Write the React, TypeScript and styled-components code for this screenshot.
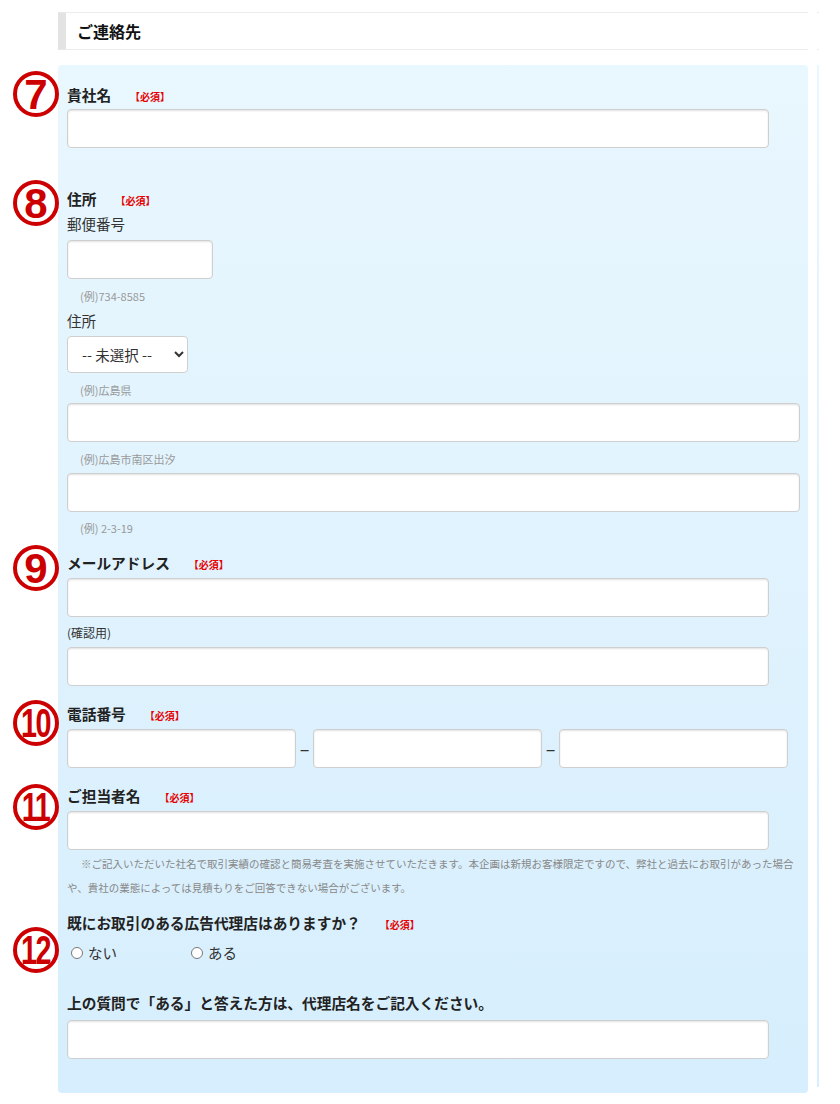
import React from 'react';
import styled, { createGlobalStyle } from 'styled-components';

const GlobalStyle = createGlobalStyle`
  body {
    margin: 0;
    background: #fff;
    font-family: "Noto Sans CJK JP", "Noto Sans", sans-serif;
    color: #222;
  }
`;

const Page = styled.div`
  display: flex;
  align-items: flex-start;
  padding: 12px 0 0 58px;
`;

const Main = styled.div`
  width: 750px;
`;

const SectionHead = styled.h2`
  margin: 0;
  height: 38px;
  box-sizing: border-box;
  display: flex;
  align-items: center;
  padding-left: 11px;
  border-top: 1px solid #ececec;
  border-bottom: 1px solid #ececec;
  border-left: 8px solid #e3e3e3;
  font-size: 16px;
  font-weight: 700;
  color: #111;
`;

const Panel = styled.div`
  margin-top: 15px;
  padding: 20px 8px 34px 9px;
  border-radius: 4px;
  background: linear-gradient(#e9f7fe, #d6eefd);
`;

const Side = styled.div`
  width: 2px;
  margin-left: 9px;
  overflow: hidden;
`;

const SideHead = styled.div`
  height: 38px;
  box-sizing: border-box;
  border-top: 1px solid #ececec;
  border-bottom: 1px solid #ececec;
`;

const SidePanel = styled.div`
  margin-top: 15px;
  height: 1022px;
  background: linear-gradient(#e9f7fe, #d6eefd);
`;

const Field = styled.div<{ $mt?: number }>`
  position: relative;
  display: flex;
  flex-direction: column;
  align-items: flex-start;
  margin-top: ${p => p.$mt ?? 0}px;
`;

const Badge = styled.div<{ $top: number }>`
  position: absolute;
  left: -54px;
  top: ${p => p.$top}px;
  width: 46px;
  height: 46px;
  box-sizing: border-box;
  border: 4px solid #cc0000;
  border-radius: 50%;
  display: flex;
  align-items: center;
  justify-content: center;
  overflow: hidden;
`;

const Num = styled.span<{ $narrow?: boolean }>`
  font-family: "Liberation Sans", Arial, sans-serif;
  font-weight: 700;
  font-size: ${p => (p.$narrow ? 40 : 42)}px;
  line-height: 1;
  color: #cc0000;
  letter-spacing: ${p => (p.$narrow ? '-2px' : '0')};
  transform: ${p => (p.$narrow ? 'scaleX(0.72) translateX(-1px)' : 'translateY(1px)')};
`;

const Label = styled.div<{ $mt?: number }>`
  margin-top: ${p => p.$mt ?? 0}px;
  height: 20px;
  font-size: 14.7px;
  font-weight: 700;
  line-height: 20px;
  color: #222;
  white-space: nowrap;
`;

const Req = styled.span`
  margin-left: 19px;
  font-size: 10px;
  font-weight: 700;
  line-height: 1;
  color: #e60000;
`;

const SubLabel = styled.div<{ $mt?: number; $small?: boolean }>`
  margin-top: ${p => p.$mt ?? 0}px;
  font-size: ${p => (p.$small ? 12 : 14.5)}px;
  line-height: ${p => (p.$small ? 16 : 20)}px;
  color: #333;
`;

const Hint = styled.div<{ $mt?: number }>`
  margin-top: ${p => p.$mt ?? 0}px;
  padding-left: 13px;
  font-size: 11px;
  line-height: 14px;
  color: #999;
`;

const TextInput = styled.input<{ $mt?: number; $w?: string }>`
  margin: ${p => p.$mt ?? 0}px 0 0 0;
  width: ${p => p.$w ?? '702px'};
  height: 39px;
  box-sizing: border-box;
  border: 1px solid #cfcfcf;
  border-radius: 4px;
  background: #fff;
  box-shadow: inset 0 1px 2px rgba(0, 0, 0, 0.12);
  padding: 0 8px;
  font-size: 14px;
  font-family: inherit;
  outline: none;
`;

const Select = styled.select<{ $mt?: number }>`
  margin-top: ${p => p.$mt ?? 0}px;
  width: 121px;
  height: 37px;
  box-sizing: border-box;
  border: 1px solid #cfcfcf;
  border-radius: 4px;
  background: #fff;
  padding: 0 4px 0 10px;
  font-size: 14.5px;
  font-family: inherit;
  color: #333;
`;

const PhoneRow = styled.div<{ $mt?: number }>`
  margin-top: ${p => p.$mt ?? 0}px;
  display: flex;
  align-items: center;
`;

const Dash = styled.span`
  width: 17px;
  text-align: center;
  font-size: 18px;
  line-height: 1;
  color: #333;
  transform: translateY(-1px);
`;

const Note = styled.p<{ $mt?: number }>`
  margin: ${p => p.$mt ?? 0}px 0 0 0;
  width: 733px;
  font-size: 10.5px;
  line-height: 24px;
  color: #888;
  text-indent: 14px;
`;

const RadioRow = styled.div<{ $mt?: number }>`
  margin-top: ${p => p.$mt ?? 0}px;
  height: 20px;
  display: flex;
  align-items: center;
  padding-left: 4px;
`;

const RadioOption = styled.label`
  min-width: 120px;
  display: inline-flex;
  align-items: center;
  gap: 5px;
  font-size: 14.5px;
  line-height: 20px;
  color: #333;
  input {
    margin: 0;
    width: 12px;
    height: 12px;
  }
`;

const phoneWidth = '229px';

export default function App() {
  return (
    <>
      <GlobalStyle />
      <Page>
        <Main>
          <SectionHead>ご連絡先</SectionHead>
          <Panel>
            <Field>
              <Badge $top={-14}><Num>7</Num></Badge>
              <Label>貴社名<Req>【必須】</Req></Label>
              <TextInput $mt={4} />
            </Field>

            <Field $mt={41}>
              <Badge $top={-9}><Num>8</Num></Badge>
              <Label>住所<Req>【必須】</Req></Label>
              <SubLabel $mt={5}>郵便番号</SubLabel>
              <TextInput $mt={6} $w="146px" />
              <Hint $mt={10}>(例)734-8585</Hint>
              <SubLabel $mt={8}>住所</SubLabel>
              <Select $mt={5} defaultValue="">
                <option value="">-- 未選択 --</option>
              </Select>
              <Hint $mt={10}>(例)広島県</Hint>
              <TextInput $mt={6} $w="733px" />
              <Hint $mt={10}>(例)広島市南区出汐</Hint>
              <TextInput $mt={7} $w="733px" />
              <Hint $mt={9}>(例) 2-3-19</Hint>
            </Field>

            <Field $mt={18}>
              <Badge $top={-8}><Num>9</Num></Badge>
              <Label>メールアドレス<Req>【必須】</Req></Label>
              <TextInput $mt={5} />
              <SubLabel $mt={8} $small>(確認用)</SubLabel>
              <TextInput $mt={6} />
            </Field>

            <Field $mt={18}>
              <Badge $top={-4}><Num $narrow>10</Num></Badge>
              <Label>電話番号<Req>【必須】</Req></Label>
              <PhoneRow $mt={5}>
                <TextInput $w={phoneWidth} />
                <Dash>–</Dash>
                <TextInput $w={phoneWidth} />
                <Dash>–</Dash>
                <TextInput $w={phoneWidth} />
              </PhoneRow>
            </Field>

            <Field $mt={18}>
              <Badge $top={-2}><Num $narrow>11</Num></Badge>
              <Label>ご担当者名<Req>【必須】</Req></Label>
              <TextInput $mt={5} />
              <Note $mt={2}>
                ※ご記入いただいた社名で取引実績の確認と簡易考査を実施させていただきます。本企画は新規お客様限定ですので、弊社と過去にお取引があった場合や、貴社の業態によっては見積もりをご回答できない場合がございます。
              </Note>
            </Field>

            <Field $mt={13}>
              <Badge $top={14}><Num $narrow>12</Num></Badge>
              <Label>既にお取引のある広告代理店はありますか？<Req>【必須】</Req></Label>
              <RadioRow $mt={10}>
                <RadioOption><input type="radio" name="agency" />ない</RadioOption>
                <RadioOption><input type="radio" name="agency" />ある</RadioOption>
              </RadioRow>
              <Label $mt={30}>上の質問で「ある」と答えた方は、代理店名をご記入ください。</Label>
              <TextInput $mt={7} />
            </Field>
          </Panel>
        </Main>
        <Side>
          <SideHead />
          <SidePanel />
        </Side>
      </Page>
    </>
  );
}
